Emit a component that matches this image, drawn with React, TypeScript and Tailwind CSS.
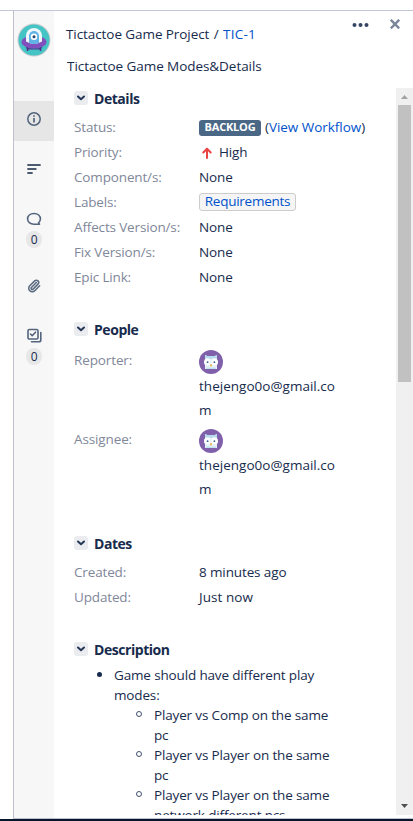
import type { ReactNode } from "react";
import { Paperclip } from "lucide-react";

function Chevron() {
  return (
    <span className="flex h-[14px] w-[14px] shrink-0 items-center justify-center rounded-[3px] bg-[#ebecf0]">
      <svg width="14" height="14" viewBox="0 0 14 14" fill="none" stroke="#253858" strokeWidth="2" strokeLinecap="round" strokeLinejoin="round">
        <path d="M4 5.5 7 8.2 10 5.5" />
      </svg>
    </span>
  );
}

function Heading({ children }: { children: ReactNode }) {
  return (
    <h2 className="flex h-[22px] items-center gap-[6px] pb-[2px] text-[14px] font-bold tracking-[-0.45px]">
      <Chevron />
      {children}
    </h2>
  );
}

function Row({ label, children }: { label: string; children: ReactNode }) {
  return (
    <div className="flex h-[25px] items-center">
      <span className="w-[125px] shrink-0 tracking-[-0.15px] text-[#7f879a]">{label}</span>
      <span className="flex items-center whitespace-nowrap">{children}</span>
    </div>
  );
}

function OwlAvatar() {
  return (
    <svg width="24" height="24" viewBox="0 0 24 24" className="block">
      <circle cx="12" cy="12" r="12" fill="#8060aa" />
      <path d="M6 5l2 1h8l2-1v4.500l1 3-1 2.500v4H6v-4l-1-2.500 1-3z" fill="#e4f1f8" />
      <path d="M6 5l2.500 1h7L18 5v3.500l-3-.5-3 1-3-1-3 .5z" fill="#b7dbed" />
      <circle cx="8.300" cy="12" r="3.200" fill="#fff" />
      <circle cx="15.700" cy="12" r="3.200" fill="#fff" />
      <circle cx="8.600" cy="12.200" r=".9" fill="#345f88" />
      <circle cx="15.400" cy="12.200" r=".9" fill="#345f88" />
      <path d="M10.800 14.500h2.400L12 17z" fill="#f5a623" />
      <path d="M7 17.500h10V19H7z" fill="#c3e0ee" />
    </svg>
  );
}

function Person({ label }: { label: string }) {
  return (
    <div className="flex h-[79px] items-start">
      <span className="mt-[-2px] w-[125px] shrink-0 leading-6 text-[#7f879a]">{label}</span>
      <div className="w-[142px]">
        <OwlAvatar />
        <p className="leading-6 tracking-[0.02px]">thejengo0o@gmail.co<br />m</p>
      </div>
    </div>
  );
}

function ProjectAvatar() {
  return (
    <svg width="34" height="34" viewBox="0 0 34 34" className="block">
      <circle cx="17" cy="17" r="16.500" fill="#c9cccf" />
      <circle cx="17" cy="17" r="15.500" fill="#45c4c6" />
      <path d="M10.500 24v4M23.500 24v4" stroke="#50308b" strokeWidth="1.500" />
      <ellipse cx="17" cy="19" rx="12.500" ry="6.500" fill="#8250bd" />
      <path d="M8 24q9 3 18 0l-3 2.500H11z" fill="#50308b" />
      <path d="M9 18.500V13a8 8 0 0 1 16 0v5.500q-8 4.500-16 0z" fill="#eef8fc" />
      <path d="M12 20v-7a5 5 0 0 1 10 0v7q-5 2-10 0z" fill="#62b3e5" />
      <circle cx="17" cy="13.700" r="3.200" fill="#fff" />
      <circle cx="17" cy="13.700" r="1.500" fill="#24466e" />
    </svg>
  );
}

function Badge() {
  return <span className="flex h-[17px] w-[16px] items-center justify-center rounded-full bg-[#e7e7e8] text-[12px] leading-none text-[#172b4d]">0</span>;
}

function Sidebar() {
  return (
    <aside className="flex w-10 shrink-0 flex-col items-center bg-[#f7f7f7] pt-3">
      <ProjectAvatar />
      <div className="mt-[44px] flex h-10 w-10 shrink-0 items-center justify-center bg-[#e6e6e6] pb-[4px]">
        <svg width="14" height="14" viewBox="0 0 14 14" fill="none" stroke="#53647c" strokeWidth="1.500">
          <circle cx="7" cy="7" r="6.200" />
          <path d="M7 6v4.500M7 3.300v1.500" strokeWidth="1.700" />
        </svg>
      </div>
      <svg className="mt-[22px] shrink-0" width="14" height="12" viewBox="0 0 14 12" stroke="#4c5b70" strokeWidth="1.800" strokeLinecap="round">
        <path d="M1 2h12M1 6h7.800M1 10h4" />
      </svg>
      <svg className="mt-[37px] shrink-0" width="16" height="15" viewBox="0 0 16 15" fill="none" stroke="#53647c" strokeWidth="1.600" strokeLinecap="round" strokeLinejoin="round">
        <path d="M13.500 12.200H8C4 12.200 1.600 9.900 1.600 7S4 1.500 8 1.500 14.400 4 14.400 7c0 1.600-.7 2.900-1.900 3.800l1 1.400" />
      </svg>
      <div className="mt-[4px] shrink-0"><Badge /></div>
      <Paperclip className="mt-[31px] shrink-0 text-[#596981]" size={14} strokeWidth={2.600} />
      <svg className="mt-[35px] shrink-0" width="15" height="15" viewBox="0 0 15 15" fill="none" stroke="#53647c" strokeWidth="1.600" strokeLinecap="round" strokeLinejoin="round">
        <rect x="1" y="1.500" width="10" height="9.500" rx="1.300" />
        <path d="m3.500 6 1.700 1.700 3.300-3.500M13.800 4.500v7.500q0 1.800-1.800 1.800H4.500" />
      </svg>
      <div className="mt-[5px] shrink-0"><Badge /></div>
    </aside>
  );
}

const modes = [
  ["Player vs Comp on the same", "pc"],
  ["Player vs Player on the same", "pc"],
  ["Player vs Player on the same", "network different pcs"],
];

function Mode({ lines }: { lines: string[] }) {
  return (
    <li className="flex">
      <span className="mt-[6px] mr-[12px] h-[6px] w-[6px] shrink-0 rounded-full border border-[#42526e]" />
      <span className="whitespace-nowrap">{lines[0]}<br />{lines[1]}</span>
    </li>
  );
}

function Scrollbar() {
  return (
    <div className="flex w-[17px] shrink-0 flex-col items-center bg-[#f0f0f0]">
      <svg className="shrink-0" width="17" height="17"><path d="M5 11h7L8.500 7z" fill="#a3a3a3" /></svg>
      <div className="h-[277px] w-[13px] shrink-0 bg-[#c1c1c1]" />
      <svg className="mt-auto shrink-0" width="17" height="17"><path d="M5 6h7L8.500 10z" fill="#505050" /></svg>
    </div>
  );
}

export default function App() {
  return (
    <div className="h-[821px] w-[413px] overflow-hidden bg-white pt-[10px] font-['Open_Sans','Noto_Sans',sans-serif] text-[13.5px] tracking-[-0.12px] text-[#172b4d]">
      <div className="flex h-[809px] flex-col border-t border-[#c1c7d4]">
        <div className="ml-[13px] flex min-h-0 flex-1 border-b border-l border-[#bfc1cf]">
          <Sidebar />
          <main className="flex min-w-0 flex-1 flex-col">
            <header className="flex h-[77px] shrink-0 justify-between pl-[12px]">
              <div className="whitespace-nowrap pt-[11px] leading-6">
                <p className="tracking-[-0.08px]">Tictactoe Game Project <span className="ml-px">/</span> <a className="ml-px tracking-[0.25px] text-[#0052cc]">TIC-1</a></p>
                <p className="mt-2 pl-px tracking-[-0.06px]">Tictactoe Game Modes&amp;Details</p>
              </div>
              <div className="flex gap-[21px] pt-[8px] pr-[13px]">
                <svg width="17" height="12" fill="#344563"><circle cx="2.500" cy="6" r="2" /><circle cx="8.500" cy="6" r="2" /><circle cx="14.500" cy="6" r="2" /></svg>
                <svg width="10" height="12" viewBox="0 0 10 12" stroke="#7a869a" strokeWidth="2.400"><path d="m.8 .8 8.400 8.600M9.200 .8 .8 9.400" /></svg>
              </div>
            </header>
            <div className="flex h-[727px] shrink-0 overflow-hidden">
              <div className="min-w-0 flex-1 pl-5">
                <section className="h-[231px]">
                  <Heading>Details</Heading>
                  <div className="mt-[5px]">
                    <Row label="Status:">
                      <span className="mr-1 flex h-4 w-[62px] items-center justify-center rounded-[3px] bg-[#4a6785] text-[11px] font-bold tracking-[-0.2px] text-white">BACKLOG</span>
                      (<a className="text-[#0052cc] tracking-[-0.03px]">View Workflow</a>)
                    </Row>
                    <Row label="Priority:">
                      <svg className="mr-[6px] ml-[2px]" width="12" height="14" viewBox="0 0 12 14" fill="none" stroke="#ea4444" strokeWidth="2" strokeLinecap="round" strokeLinejoin="round"><path d="M6 12V3M2.300 6.500 6 2.800l3.700 3.700" /></svg>
                      High
                    </Row>
                    <Row label="Component/s:">None</Row>
                    <Row label="Labels:">
                      <a className="mb-[2px] flex h-[18px] w-[97px] items-center justify-center rounded-[3px] border border-[#cccccc] bg-[#f5f5f5] tracking-[-0.25px] text-[#0052cc]">Requirements</a>
                    </Row>
                    <Row label="Affects Version/s:">None</Row>
                    <Row label="Fix Version/s:">None</Row>
                    <Row label="Epic Link:">None</Row>
                  </div>
                </section>
                <section className="h-[214px]">
                  <Heading>People</Heading>
                  <div className="mt-[9px]">
                    <Person label="Reporter:" />
                    <Person label="Assignee:" />
                  </div>
                </section>
                <section className="h-[106px]">
                  <Heading>Dates</Heading>
                  <div className="mt-[5px]">
                    <Row label="Created:">8 minutes ago</Row>
                    <Row label="Updated:"><span className="tracking-[0.05px]">Just now</span></Row>
                  </div>
                </section>
                <section>
                  <Heading>Description</Heading>
                  <div className="mt-[4px] flex pl-[23px] leading-5 tracking-[-0.15px]">
                    <span className="mt-[7px] mr-[12px] h-[5px] w-[5px] shrink-0 rounded-full bg-[#172b4d]" />
                    <div className="whitespace-nowrap">
                      Game should have different play<br />modes:
                      <ul className="pl-[22px]">
                        {modes.map((lines, i) => <Mode key={i} lines={lines} />)}
                      </ul>
                    </div>
                  </div>
                </section>
              </div>
              <Scrollbar />
            </div>
          </main>
        </div>
      </div>
      <div className="h-[2px] bg-[#07152b]" />
    </div>
  );
}
